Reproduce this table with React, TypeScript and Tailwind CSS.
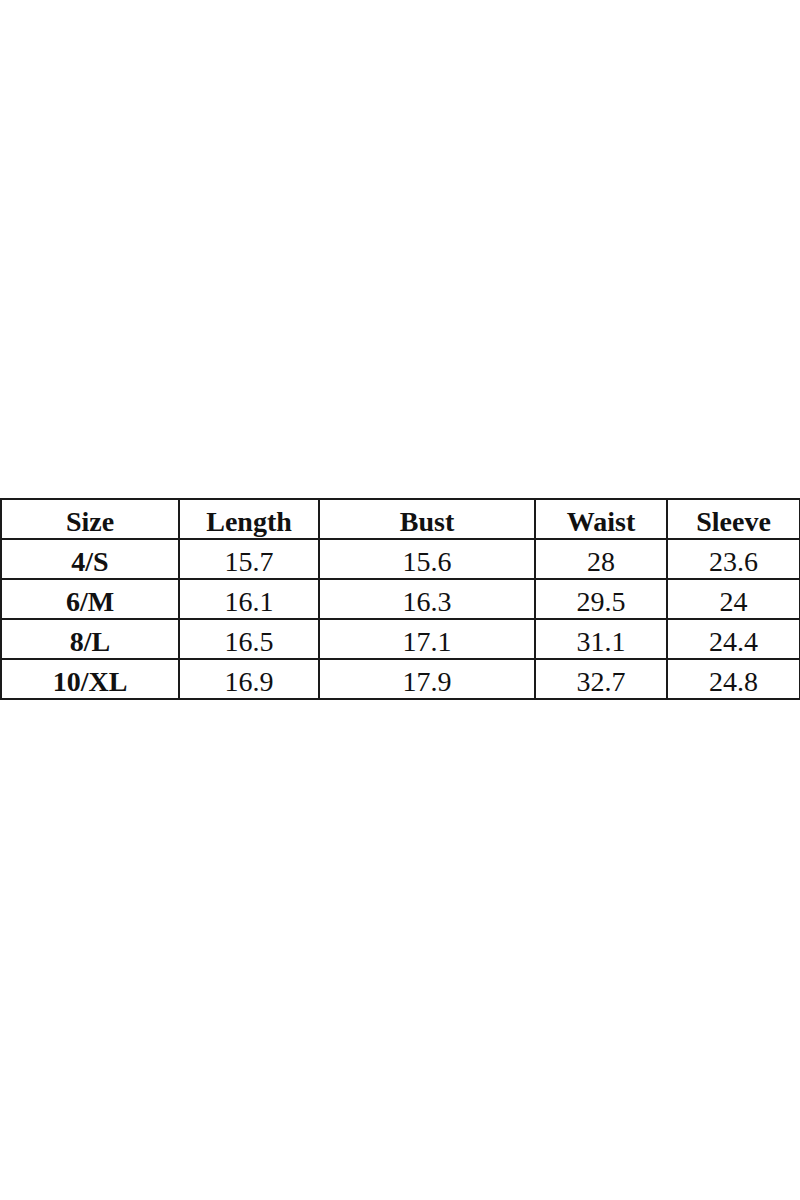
const HEADERS = ["Size", "Length", "Bust", "Waist", "Sleeve"];
const WIDTHS = ["w-[178px]", "w-[140px]", "w-[216px]", "w-[132px]", "w-[133px]"];

const ROWS = [
  ["4/S", "15.7", "15.6", "28", "23.6"],
  ["6/M", "16.1", "16.3", "29.5", "24"],
  ["8/L", "16.5", "17.1", "31.1", "24.4"],
  ["10/XL", "16.9", "17.9", "32.7", "24.8"],
];

export default function App() {
  return (
    <div className="flex h-[1200px] w-[800px] items-center bg-white pb-[2px] font-['Liberation_Serif','Times_New_Roman',serif] text-[28px] text-[#111]">
      <table className="w-[799px] table-fixed border-collapse border-2 border-[#1a1a1a]">
        <colgroup>
          {WIDTHS.map((w, i) => (
            <col key={i} className={w} />
          ))}
        </colgroup>
        <thead>
          <tr className="h-[40px]">
            {HEADERS.map((h) => (
              <th key={h} className="border-2 border-[#1a1a1a] pt-[6px] text-center font-bold leading-none">
                {h}
              </th>
            ))}
          </tr>
        </thead>
        <tbody>
          {ROWS.map((row) => (
            <tr key={row[0]} className="h-[40px]">
              {row.map((cell, i) => (
                <td
                  key={i}
                  className={`border-2 border-[#1a1a1a] pt-[6px] text-center leading-none ${i === 0 ? "font-bold" : "font-normal"}`}
                >
                  {cell}
                </td>
              ))}
            </tr>
          ))}
        </tbody>
      </table>
    </div>
  );
}
